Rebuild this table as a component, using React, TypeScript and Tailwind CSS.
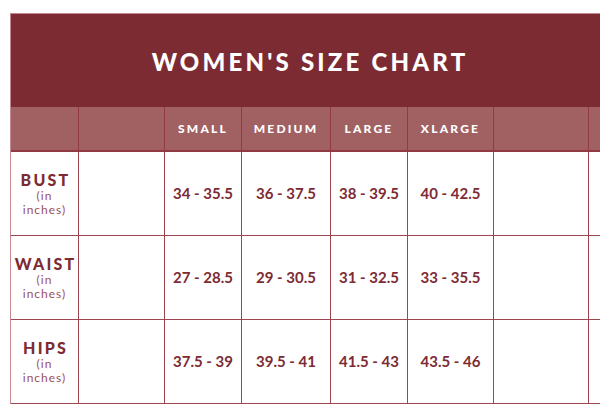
const cols = "grid grid-cols-[68px_86px_77px_89px_77px_86px_95px_18px]";

const sizes = ["SMALL", "MEDIUM", "LARGE", "XLARGE"];

const rows = [
  { label: "BUST", values: ["34 - 35.5", "36 - 37.5", "38 - 39.5", "40 - 42.5"] },
  { label: "WAIST", values: ["27 - 28.5", "29 - 30.5", "31 - 32.5", "33 - 35.5"] },
  { label: "HIPS", values: ["37.5 - 39", "39.5 - 41", "41.5 - 43", "43.5 - 46"] },
];

export default function App() {
  return (
    <div className="w-[600px] h-[420px] bg-white overflow-hidden pt-[13px] pl-[10px] font-['Lato',sans-serif]">
      <div className="w-[596px] border-l border-t border-[#c48a90]">
        <div className="h-[93px] bg-[#7d2b33] flex items-center justify-center">
          <h1 className="text-white font-black text-[24px] tracking-[3.2px] pt-[2px] pl-[3px]">WOMEN'S SIZE CHART</h1>
        </div>
        <div className={`${cols} h-[45px] bg-[#a16163] border-b-2 border-[#923a44]`}>
          <div className="border-r border-[#923a44]" />
          <div className="border-r border-[#923a44]" />
          {sizes.map((s) => (
            <div key={s} className="border-r border-[#923a44] flex items-center justify-center text-white font-black text-[12px] tracking-[2.2px] pt-[1px]">
              {s}
            </div>
          ))}
          <div className="border-r border-[#923a44]" />
          <div />
        </div>
        {rows.map((r) => (
          <div key={r.label} className={`${cols} h-[84px] border-b border-[#9e4550]`}>
            <div className="border-r border-[#9e4550] flex flex-col items-center justify-center pt-[1px]">
              <div className="text-[#7d2b33] font-black text-[16px] leading-[18px] tracking-[2.2px] pl-[2px]">{r.label}</div>
              <div className="text-[#9c4f57] text-[12px] leading-[14px] tracking-[1px] text-center">(in<br />inches)</div>
            </div>
            <div className="border-r border-[#9e4550]" />
            {r.values.map((v) => (
              <div key={v} className="border-r border-[#9e4550] flex items-center justify-center text-[#7d2b33] font-bold text-[15px]">
                {v}
              </div>
            ))}
            <div className="border-r border-[#9e4550]" />
            <div />
          </div>
        ))}
      </div>
    </div>
  );
}
